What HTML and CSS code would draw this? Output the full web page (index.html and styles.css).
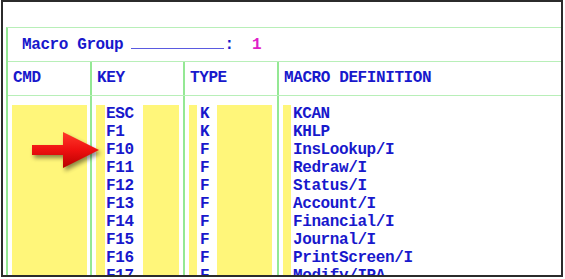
FILE: index.html
```html
<!DOCTYPE html>
<html lang="en">
<head>
  <meta charset="UTF-8" />
  <title>Macro Group</title>
  <meta name="viewport" content="width=device-width, initial-scale=1.0" />
  <link rel="stylesheet" href="styles.css">
</head>
<body>
  <div class="screen">
    <div class="frame">
      <!-- group line -->
      <div class="group-row">
        Macro Group <span class="blank"></span>:&nbsp;&nbsp;<span class="group-no">1</span>
      </div>

      <!-- column headings -->
      <div class="cols head-row">
        <div class="col col-cmd">CMD</div>
        <div class="col col-key">KEY</div>
        <div class="col col-type">TYPE</div>
        <div class="col col-def">MACRO DEFINITION</div>
      </div>

      <!-- macro lines -->
      <div class="cols body-row">
        <div class="col col-cmd">
          <div class="fill"></div>
        </div>
        <div class="col col-key">
          <div class="strip"></div>
          <div class="field">ESC<br>F1<br>F10<br>F11<br>F12<br>F13<br>F14<br>F15<br>F16<br>F17</div>
          <div class="fill"></div>
        </div>
        <div class="col col-type">
          <div class="strip"></div>
          <div class="field">K<br>K<br>F<br>F<br>F<br>F<br>F<br>F<br>F<br>F</div>
          <div class="fill"></div>
        </div>
        <div class="col col-def">
          <div class="strip"></div>
          <div class="field">KCAN<br>KHLP<br>InsLookup/I<br>Redraw/I<br>Status/I<br>Account/I<br>Financial/I<br>Journal/I<br>PrintScreen/I<br>Modify/IPA</div>
        </div>
      </div>
    </div>

    <!-- callout arrow -->
    <svg class="arrow" width="78" height="48" viewBox="0 0 78 48">
      <defs>
        <linearGradient id="red" x1="0" y1="0" x2="0" y2="1">
          <stop offset="0" stop-color="#ff3a2a" />
          <stop offset="0.5" stop-color="#ee1010" />
          <stop offset="1" stop-color="#b80000" />
        </linearGradient>
      </defs>
      <path d="M4 18 L35 18 L35 5 L71 23 L35 41 L35 28 L4 28 Z" fill="url(#red)" />
    </svg>
  </div>
</body>
</html>
```

FILE: styles.css
```css
body {
  margin: 0;
  background: #ffffff;
  font-family: "Liberation Mono", "DejaVu Sans Mono", monospace;
  font-weight: bold;
  font-size: 16px;
  letter-spacing: -0.4px;
  line-height: 18px;
  color: #1818cc;
}
.screen {
  position: relative;
  box-sizing: border-box;
  width: 562px;
  height: 277px;
  margin-left: 1px;
  border: 2px solid #2b2b2b;
  background: #ffffff;
  overflow: hidden;
}
.frame {
  margin: 25px 0 0 3px;
  border-left: 2px solid #94e894;
  border-top: 1px solid #b8efb8;
}
.group-row {
  height: 34px;
  box-sizing: border-box;
  padding: 7px 0 0 14px;
  border-bottom: 1px solid #b8efb8;
  white-space: nowrap;
}
.blank {
  display: inline-block;
  width: 93px;
  height: 13px;
  margin-left: -1px;
  vertical-align: baseline;
  border-bottom: 1px solid #5a5ae0;
}
.group-no {
  color: #e01ec8;
}
.cols {
  display: flex;
}
.head-row {
  height: 34px;
  box-sizing: border-box;
  border-bottom: 1px solid #b8efb8;
}
.head-row .col {
  padding: 7px 0 0 5px;
}
.col {
  box-sizing: border-box;
  white-space: nowrap;
}
.col-key,
.col-type,
.col-def {
  border-left: 2px solid #94e894;
}
.col-cmd {
  width: 82px;
}
.col-key {
  width: 93px;
}
.col-type {
  width: 94px;
}
.col-def {
  flex: 1;
}
.body-row {
  height: 200px;
}
.body-row .col {
  display: flex;
  padding: 9px 4px 0 4px;
}
.fill {
  flex: 1;
  background: #fff67a;
}
.strip {
  width: 9px;
  background: #fff67a;
}
.field {
  padding-left: 1px;
}
.col-cmd .fill {
  margin-right: -1px;
}
.col-key .field {
  width: 38px;
  box-sizing: border-box;
}
.col-type .strip {
  width: 8px;
}
.col-type .field {
  width: 20px;
  box-sizing: border-box;
  padding-left: 3px;
}
.col-type.col {
  padding-right: 5px;
}
.col-def .strip {
  width: 8px;
}
.col-def .field {
  padding-left: 2px;
}
.arrow {
  position: absolute;
  left: 25px;
  top: 125px;
  filter: drop-shadow(2px 3px 2px rgba(0, 0, 0, 0.45));
}
```
